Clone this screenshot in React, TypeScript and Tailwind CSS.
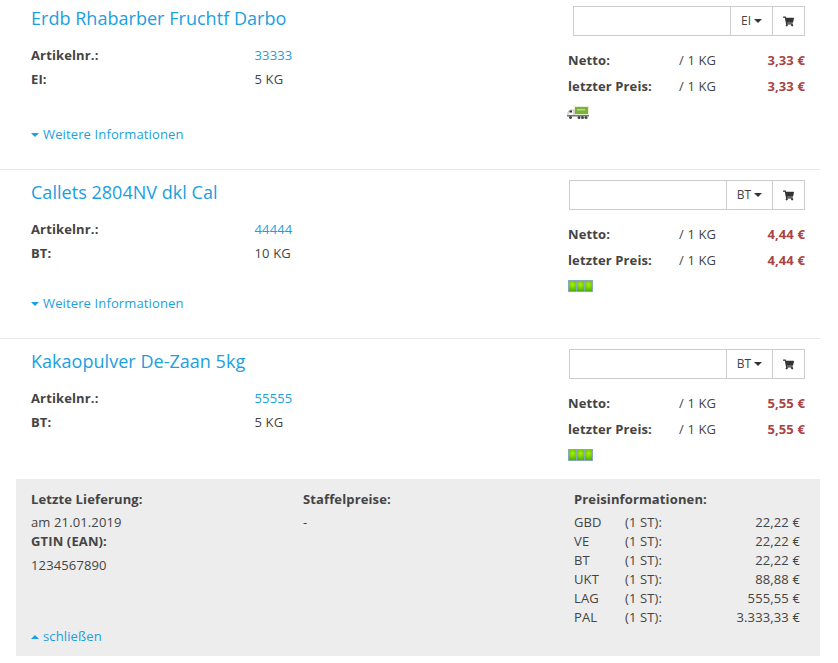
import { FaShoppingCart } from 'react-icons/fa';

interface Product {
  title: string;
  number: string;
  unit: string;
  weight: string;
  price: string;
  stock: 'truck' | 'bars';
}

const products: Product[] = [
  { title: 'Erdb Rhabarber Fruchtf Darbo', number: '33333', unit: 'EI', weight: '5 KG', price: '3,33 €', stock: 'truck' },
  { title: 'Callets 2804NV dkl Cal', number: '44444', unit: 'BT', weight: '10 KG', price: '4,44 €', stock: 'bars' },
  { title: 'Kakaopulver De-Zaan 5kg', number: '55555', unit: 'BT', weight: '5 KG', price: '5,55 €', stock: 'bars' },
];

const tiers = [
  ['GBD', '22,22 €'],
  ['VE', '22,22 €'],
  ['BT', '22,22 €'],
  ['UKT', '88,88 €'],
  ['LAG', '555,55 €'],
  ['PAL', '3.333,33 €'],
];

function Caret({ up, className }: { up?: boolean; className?: string }) {
  return (
    <svg width="8" height="4" viewBox="0 0 8 4" className={`shrink-0 ${className ?? ''}`} fill="currentColor">
      <path d={up ? 'M0 4 L4 0 L8 4 Z' : 'M0 0 H8 L4 4 Z'} />
    </svg>
  );
}

function Truck() {
  return (
    <svg width="22" height="14" viewBox="0 0 22 14" className="block">
      <rect x="7" y="0" width="15" height="9" fill="#e4efd2" />
      <rect x="8" y="1" width="13" height="7" fill="#7cb13a" />
      <rect x="10" y="3" width="8" height="1.5" fill="#b5d68e" />
      <path d="M1 6 L3 4 H7 V10 H1 Z" fill="#f4f4f4" stroke="#888" strokeWidth="0.5" />
      <rect x="2.5" y="4.5" width="2.5" height="2" fill="#333" />
      <rect x="0" y="9" width="22" height="1.5" fill="#777" />
      <circle cx="3.5" cy="11.5" r="1.5" fill="#444" />
      <circle cx="12" cy="11.5" r="1.5" fill="#444" />
      <circle cx="15.5" cy="11.5" r="1.5" fill="#444" />
      <circle cx="19" cy="11.5" r="1.5" fill="#444" />
    </svg>
  );
}

function Bars() {
  return (
    <div className="flex w-fit gap-px bg-[#8aa9b8] p-px">
      {[0, 1, 2].map((i) => (
        <div key={i} className="h-[10px] w-[7px] bg-[radial-gradient(circle_at_50%_35%,#a8f000,#3fae00)]" />
      ))}
    </div>
  );
}

function ProductRow({ product, first, last }: { product: Product; first: boolean; last: boolean }) {
  return (
    <div className={`flex pl-[31px] pr-[15px] ${first ? 'h-[170px] pt-[6px]' : last ? 'h-[140px] pt-[10px]' : 'h-[169px] pt-[10px]'} ${last ? '' : 'border-b border-[#e8e8e8]'}`}>
      <div className="w-[537px] shrink-0">
        <h2 className="text-[18px] leading-[25px] tracking-[0.03px] text-[#1a9fe0]">{product.title}</h2>
        <div className="mt-[13px] flex h-[24px] items-center">
          <span className="w-[223.5px] font-bold">Artikelnr.:</span>
          <span className="text-[#1a9fe0]">{product.number}</span>
        </div>
        <div className="flex h-[24px] items-center">
          <span className="w-[223.5px] font-bold">{product.unit}:</span>
          <span>{product.weight}</span>
        </div>
        {!last && (
          <div className={`flex items-center gap-[4px] text-[#1a9fe0] ${first ? 'mt-[33px]' : 'mt-[28px]'}`}>
            <Caret />
            Weitere Informationen
          </div>
        )}
      </div>
      <div className="w-[237px] shrink-0">
        <div className="flex h-[30px] justify-end text-[12px] tracking-normal">
          <div className="w-[158px] border border-[#ccc] bg-white" />
          <div className="ml-[-1px] flex items-center gap-[3px] border border-[#ccc] px-[10px]">
            {product.unit}
            <Caret className="text-[#333]" />
          </div>
          <div className="ml-[-1px] flex w-[33px] items-center justify-center border border-[#ccc]">
            <FaShoppingCart className="size-[11px] text-[#333]" />
          </div>
        </div>
        <div className="mt-[12px] flex h-[26px] items-center">
          <span className="w-[111px] font-bold">Netto:</span>
          <span>/ 1 KG</span>
          <span className="ml-auto font-bold text-[#a94442]">{product.price}</span>
        </div>
        <div className="flex h-[26px] items-center">
          <span className="w-[111px] font-bold">letzter Preis:</span>
          <span>/ 1 KG</span>
          <span className="ml-auto font-bold text-[#a94442]">{product.price}</span>
        </div>
        <div className="mt-[6px] ml-[-1px]">{product.stock === 'truck' ? <Truck /> : <div className="ml-px"><Bars /></div>}</div>
      </div>
    </div>
  );
}

function Details() {
  return (
    <div className="ml-[16px] flex h-[177px] flex-col bg-[#ededed] px-[15px] pt-[10px]">
      <div className="flex flex-1">
        <div className="w-[272px] shrink-0">
          <div className="font-bold leading-[20px]">Letzte Lieferung:</div>
          <div className="mt-[4px] leading-[19px]">am 21.01.2019</div>
          <div className="font-bold leading-[19px]">GTIN (EAN):</div>
          <div className="mt-[5px] leading-[19px]">1234567890</div>
        </div>
        <div className="w-[271px] shrink-0">
          <div className="font-bold leading-[20px]">Staffelpreise:</div>
          <div className="mt-[4px] leading-[19px]">-</div>
        </div>
        <div className="w-[226px] shrink-0">
          <div className="font-bold leading-[20px]">Preisinformationen:</div>
          <div className="mt-[4px]">
            {tiers.map(([name, price]) => (
              <div key={name} className="flex h-[19px] items-center">
                <span className="w-[51px]">{name}</span>
                <span>(1 ST):</span>
                <span className="ml-auto">{price}</span>
              </div>
            ))}
          </div>
        </div>
      </div>
      <div className="mb-[10px] flex items-center gap-[4px] text-[#1a9fe0]">
        <Caret up />
        schließen
      </div>
    </div>
  );
}

export default function App() {
  return (
    <div className="h-[663px] w-[820px] overflow-hidden bg-white font-['Open_Sans',sans-serif] text-[13px] tracking-[0.13px] text-[#444]">
      {products.map((product, i) => (
        <ProductRow key={product.number} product={product} first={i === 0} last={i === products.length - 1} />
      ))}
      <Details />
    </div>
  );
}
